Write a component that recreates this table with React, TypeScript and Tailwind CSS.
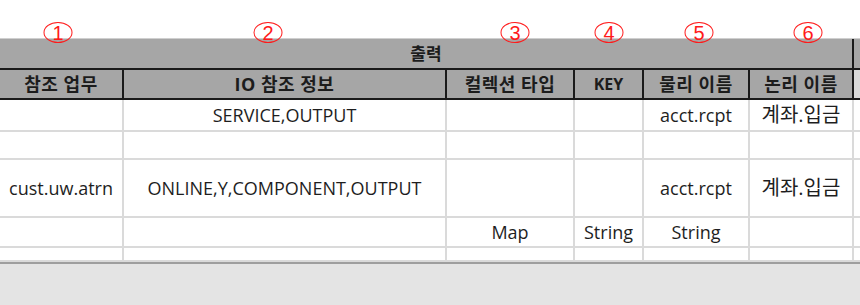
import React from "react";

const cols = "grid-cols-[124px_323px_128px_69px_106px_104px_6px]";

const markers = [
  { n: "1", x: 58 },
  { n: "2", x: 268 },
  { n: "3", x: 515 },
  { n: "4", x: 609 },
  { n: "5", x: 699 },
  { n: "6", x: 808 },
];

const headers = ["참조 업무", "IO 참조 정보", "컬렉션 타입", "KEY", "물리 이름", "논리 이름"];

type Row = { h: string; cells: string[] };

const rows: Row[] = [
  { h: "h-[30px]", cells: ["", "SERVICE,OUTPUT", "", "", "acct.rcpt", "계좌.입금"] },
  { h: "h-[30px]", cells: ["", "", "", "", "", ""] },
  { h: "h-[58px]", cells: ["cust.uw.atrn", "ONLINE,Y,COMPONENT,OUTPUT", "", "", "acct.rcpt", "계좌.입금"] },
  { h: "h-[30px]", cells: ["", "", "Map", "String", "String", ""] },
  { h: "h-[14px]", cells: ["", "", "", "", "", ""] },
];

const hasHangul = (s: string) => /[\uac00-\ud7a3]/.test(s);

function Marker({ n, x }: { n: string; x: number }) {
  return (
    <div
      className="absolute top-[22px] flex h-[21px] w-[29px] -translate-x-1/2 items-center justify-center rounded-[50%] border border-[#ff1a1a] text-[20px] leading-none text-[#ff1a1a]"
      style={{ left: x, fontFamily: '"Liberation Sans", sans-serif' }}
    >
      <span className="pt-[1px]">{n}</span>
    </div>
  );
}

export default function App() {
  return (
    <div
      className="relative flex h-[305px] w-[860px] flex-col overflow-hidden bg-white"
      style={{ fontFamily: '"Open Sans", "Noto Sans CJK KR", sans-serif' }}
    >
      {/* annotation strip */}
      <div className="h-[38px] shrink-0" />
      {markers.map((m) => (
        <Marker key={m.n} n={m.n} x={m.x} />
      ))}

      {/* 출력 band */}
      <div className={`grid ${cols} h-[32px] shrink-0 border-t border-[#cfcfcf] bg-[#a6a6a6]`}>
        <div className="col-span-6 flex items-center justify-center border-b-2 border-r-2 border-[#1a1a1a] text-[17px] font-bold text-[#1c1c1c]">
          출력
        </div>
        <div className="border-b-2 border-[#1a1a1a]" />
      </div>

      {/* header row */}
      <div className={`grid ${cols} h-[30px] shrink-0`}>
        {headers.map((h) => (
          <div
            key={h}
            className={`flex items-center justify-center border-b-2 border-r-2 border-[#1a1a1a] bg-[#a6a6a6] font-bold text-[#1c1c1c] ${
              h === "KEY" ? "text-[16px]" : "text-[18px] tracking-[0.5px]"
            }`}
          >
            {h}
          </div>
        ))}
        <div className="border-b-2 border-[#1a1a1a] bg-[#d9d9d9]" />
      </div>

      {/* body rows */}
      {rows.map((r, i) => (
        <div key={i} className={`grid ${cols} ${r.h} shrink-0`}>
          {r.cells.map((c, j) => (
            <div
              key={j}
              className={`flex items-center justify-center border-b-2 border-r-2 border-[#dadada] text-[#1e1e1e] ${
                hasHangul(c) ? "text-[20px]" : "text-[18px]"
              }`}
            >
              {c}
            </div>
          ))}
          <div className="border-b-2 border-[#dadada]" />
        </div>
      ))}

      {/* empty sheet area */}
      <div className="flex-1 border-t-2 border-[#9e9e9e] bg-[#e4e4e4]" />
    </div>
  );
}
